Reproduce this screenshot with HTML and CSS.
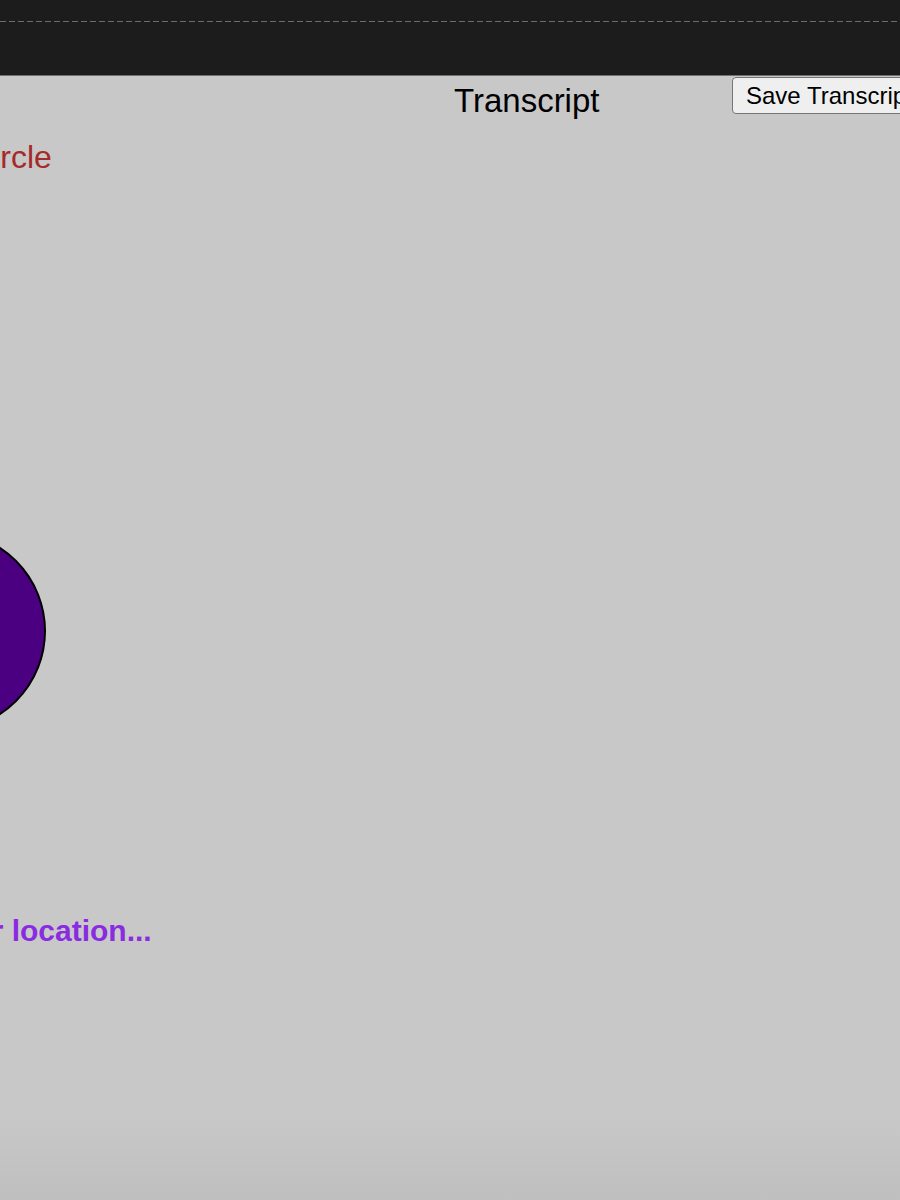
FILE: index.html
```html
<!DOCTYPE html>
<html lang="en">
<head>
<meta charset="utf-8">
<title>Transcript</title>
<link rel="stylesheet" href="styles.css">
</head>
<body>
<header class="topbar">
  <div class="topbar-rule"></div>
</header>
<main class="stage">
  <div class="toolbar">
    <h1 class="title">Transcript</h1>
    <button class="save-btn" type="button">Save Transcript</button>
  </div>
  <p class="shape-label">Circle</p>
  <div class="shape-circle"></div>
  <p class="status">Getting your location...</p>
</main>
</body>
</html>
```
FILE: styles.css
```css
html, body {
  margin: 0;
  padding: 0;
  height: 100%;
}
body {
  font-family: "Liberation Sans", Arial, Helvetica, sans-serif;
  background: #c8c8c8;
  overflow: hidden;
}
.topbar {
  height: 54px;
  background: #1c1c1c;
  border-bottom: 1px solid #6f6f6f;
  padding-top: 21px;
}
.topbar-rule {
  height: 1px;
  background: repeating-linear-gradient(to right, #6c6c6c 0 6px, transparent 6px 9px);
}
.stage {
  height: 1124px;
  background: linear-gradient(to bottom, #c8c8c8 0, #c8c8c8 1040px, #bfbfbf 1124px);
  display: flex;
  flex-direction: column;
  align-items: flex-start;
}
.toolbar {
  display: flex;
  align-items: flex-start;
  margin-top: 1px;
  padding-left: 454px;
}
.title {
  margin: 5px 0 0 0;
  font-size: 33px;
  font-weight: normal;
  line-height: 37px;
  color: #000;
  width: 278px;
}
.save-btn {
  font-family: "Liberation Sans", Arial, Helvetica, sans-serif;
  font-size: 24px;
  line-height: 27px;
  padding: 4px 13px;
  background: #efefef;
  color: #000;
  border: 1px solid #767676;
  border-radius: 4px;
  white-space: nowrap;
  flex-shrink: 0;
}
.shape-label {
  margin: 20px 0 0 -30px;
  font-size: 32px;
  line-height: 37px;
  color: #a52a2a;
}
.shape-circle {
  margin: 355px 0 0 -154px;
  width: 196px;
  height: 196px;
  border: 2px solid #000;
  border-radius: 50%;
  background: #4b0082;
  flex-shrink: 0;
}
.status {
  margin: 181px 0 0 -175px;
  font-size: 30px;
  font-weight: bold;
  line-height: 37px;
  color: #8a2be2;
  white-space: nowrap;
}
```
